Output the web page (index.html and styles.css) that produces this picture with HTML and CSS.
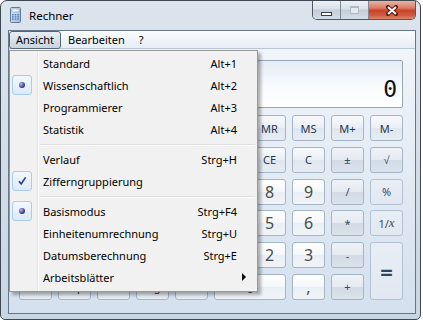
FILE: index.html
```html
<!DOCTYPE html>
<html lang="de">
  <head>
    <meta charset="UTF-8" />
    <title>Rechner</title>
    <link rel="stylesheet" href="styles.css">
  </head>
  <body>
    <div class="window">
      <div class="titlebar">
        <svg class="app-icon" width="11" height="16" viewBox="0 0 11 16">
          <defs>
            <linearGradient id="icobody" x1="0" y1="0" x2="1" y2="1">
              <stop offset="0" stop-color="#e8f0f9" />
              <stop offset="1" stop-color="#9cb6d3" />
            </linearGradient>
          </defs>
          <rect x="0.5" y="0.5" width="10" height="15" rx="1" fill="url(#icobody)" stroke="#5d7898" />
          <rect x="2" y="2" width="7" height="3" fill="#f6faff" stroke="#7f99b7" stroke-width="0.6" />
          <g fill="#4e7fbf">
            <rect x="2" y="7" width="1.6" height="1.4" /><rect x="4.7" y="7" width="1.6" height="1.4" /><rect x="7.4" y="7" width="1.6" height="1.4" />
            <rect x="2" y="9.2" width="1.6" height="1.4" /><rect x="4.7" y="9.2" width="1.6" height="1.4" /><rect x="7.4" y="9.2" width="1.6" height="1.4" />
            <rect x="2" y="11.4" width="1.6" height="1.4" /><rect x="4.7" y="11.4" width="1.6" height="1.4" /><rect x="7.4" y="11.4" width="1.6" height="1.4" />
          </g>
        </svg>
        <span class="title">Rechner</span>
        <div class="caption">
          <div class="cap-btn"><span class="min-bar"></span></div>
          <div class="cap-btn"><span class="max-box"></span></div>
          <div class="cap-btn close">
            <svg width="12" height="11" viewBox="0 0 12 11">
              <path d="M2 2 L10 9 M10 2 L2 9" stroke="#5a1a0e" stroke-width="4" stroke-linecap="square" />
              <path d="M2 2 L10 9 M10 2 L2 9" stroke="#fff" stroke-width="2" />
            </svg>
          </div>
        </div>
      </div>

      <div class="client">
        <div class="menubar">
          <span class="menu-item open">Ansicht</span>
          <span class="menu-item">Bearbeiten</span>
          <span class="menu-item">?</span>
        </div>

        <div class="calc">
          <div class="display">0</div>

          <!-- die Tasten unter dem offenen Menü bleiben ohne Beschriftung -->
          <div class="keys">
            <div class="angle span5"></div>
            <div class="k"></div><div class="k">MR</div><div class="k">MS</div><div class="k">M+</div><div class="k">M-</div>

            <div></div><div class="k"></div><div class="k"></div><div class="k"></div><div class="k"></div>
            <div class="k"></div><div class="k">CE</div><div class="k">C</div><div class="k op">±</div><div class="k op">√</div>

            <div class="k"></div><div class="k"></div><div class="k"></div><div class="k"></div><div class="k"></div>
            <div class="k num"></div><div class="k num">8</div><div class="k num">9</div><div class="k op">/</div><div class="k fn">%</div>

            <div class="k"></div><div class="k"></div><div class="k"></div><div class="k"></div><div class="k"></div>
            <div class="k num"></div><div class="k num">5</div><div class="k num">6</div><div class="k op">*</div><div class="k fn">1/<i>x</i></div>

            <div class="k"></div><div class="k"></div><div class="k"></div><div class="k"></div><div class="k"></div>
            <div class="k num"></div><div class="k num">2</div><div class="k num">3</div><div class="k op">-</div><div class="k fn equals">=</div>

            <div class="k">F-E</div><div class="k">Exp</div><div class="k">Mod</div><div class="k">log</div><div class="k">10ˣ</div>
            <div class="k num zero">0</div><div class="k num">,</div><div class="k op">+</div>
          </div>
        </div>
      </div>

      <!-- aufgeklapptes Menü "Ansicht" -->
      <div class="dropdown">
        <div class="item"><span></span><span>Standard</span><span class="key">Alt+1</span><span></span></div>
        <div class="item"><span class="mark"><i class="dot"></i></span><span>Wissenschaftlich</span><span class="key">Alt+2</span><span></span></div>
        <div class="item"><span></span><span>Programmierer</span><span class="key">Alt+3</span><span></span></div>
        <div class="item"><span></span><span>Statistik</span><span class="key">Alt+4</span><span></span></div>
        <div class="sep"></div>
        <div class="item"><span></span><span>Verlauf</span><span class="key">Strg+H</span><span></span></div>
        <div class="item">
          <span class="mark">
            <svg width="10" height="10" viewBox="0 0 10 10"><path d="M2 5.2 L4.2 8 L8.6 1.4" fill="none" stroke="#1d3a8f" stroke-width="1.6" /></svg>
          </span>
          <span>Zifferngruppierung</span><span class="key"></span><span></span>
        </div>
        <div class="sep"></div>
        <div class="item"><span class="mark"><i class="dot"></i></span><span>Basismodus</span><span class="key">Strg+F4</span><span></span></div>
        <div class="item"><span></span><span>Einheitenumrechnung</span><span class="key">Strg+U</span><span></span></div>
        <div class="item"><span></span><span>Datumsberechnung</span><span class="key">Strg+E</span><span></span></div>
        <div class="item"><span></span><span>Arbeitsblätter</span><span class="key"></span><span class="arrow"></span></div>
      </div>
    </div>
  </body>
</html>
```

FILE: styles.css
```css
* {
  box-sizing: border-box;
  --frame-top: #dce5ee;
  --frame-bottom: #c8d5e3;
  --line: #667789;
  --label: #22364f;
}

body {
  margin: 0;
  background-color: #fff;
  font-family: "Noto Sans", sans-serif;
  font-size: 11px;
  color: #000;
}

.window {
  position: relative;
  width: 421px;
  height: 320px;
  border: 1px solid #3e4853;
  border-radius: 7px 7px 5px 5px;
  background: linear-gradient(var(--frame-top), var(--frame-bottom));
  padding: 0 4px 5px 7px;
  display: flex;
  flex-direction: column;
}

/* Titelleiste */
.titlebar {
  height: 29px;
  display: flex;
  align-items: flex-start;
}

.app-icon {
  margin: 6px 0 0 2px;
}

.title {
  margin: 7px 0 0 8px;
  font-size: 11.5px;
  line-height: 16px;
}

.caption {
  margin-left: auto;
  display: flex;
  height: 19px;
  border: 1px solid #4e5a68;
  border-top: none;
  border-radius: 0 0 5px 5px;
  overflow: hidden;
}

.cap-btn {
  width: 28px;
  display: flex;
  justify-content: center;
  background: linear-gradient(#eef2f6, #d9e0e8 45%, #c3ceda 50%, #d4dde7);
  border-right: 1px solid #7d8a99;
}

.min-bar {
  width: 11px;
  height: 4px;
  margin-top: 11px;
  border: 1px solid #35404d;
  background-color: #fff;
}

.max-box {
  width: 9px;
  height: 8px;
  margin-top: 5px;
  border: 1px solid #b0bac6;
  border-top-width: 2px;
  background-color: #e4e9ef;
}

.cap-btn.close {
  width: 46px;
  border-right: none;
  align-items: center;
  background: linear-gradient(#eab3a5, #d97a62 40%, #c7442a 52%, #cf5c40 80%, #dc876a);
}

/* Fensterinhalt */
.client {
  flex: 1;
  border: 1px solid var(--line);
  background: linear-gradient(#f2f6fa, #d4e0ee);
  display: flex;
  flex-direction: column;
}

.menubar {
  height: 18px;
  display: flex;
  background: linear-gradient(#fbfcfe, #e6edf6);
  border-bottom: 1px solid #b9c5d3;
}

.menu-item {
  height: 18px;
  line-height: 16px;
  padding: 0 6px;
  border: 1px solid transparent;
  border-radius: 3px;
}

.menu-item.open {
  border-color: #56677a;
  background: linear-gradient(#e8edf3, #c9d4e0);
}

.calc {
  padding: 11px 0 0 10px;
}

.display {
  width: 384px;
  height: 48px;
  margin-bottom: 7px;
  border: 1px solid #97a7ba;
  border-radius: 2px;
  background: linear-gradient(#e5ecf4, #f8fafd 55%, #fff);
  font-family: "DejaVu Sans Mono", monospace;
  font-size: 23px;
  line-height: 28px;
  text-align: right;
  padding: 14px 5px 0 0;
  color: #111;
}

.keys {
  display: grid;
  grid-template-columns: repeat(10, 33px);
  grid-auto-rows: 26px;
  column-gap: 6px;
  row-gap: 5.8px;
}

.k {
  display: flex;
  align-items: center;
  justify-content: center;
  border: 1px solid #a5b4c7;
  border-radius: 3px;
  background: linear-gradient(#f7f9fc, #eaeff5 50%, #dfe6ef 50%, #e6ecf3);
  color: var(--label);
  font-size: 11px;
}

.k.num {
  background: linear-gradient(#fefefe, #f4f7fa 50%, #eaeff5 50%, #f0f4f8);
  color: #4a4a4a;
  font-size: 16px;
}

.k.op {
  background: linear-gradient(#eff3f8, #e4eaf1 50%, #d2dbe6 50%, #dae2ec);
  color: #3a4c62;
}

.k.fn {
  background: linear-gradient(#e8eef5, #e1e8f1);
  border-color: #b3c1d2;
  color: #3a4c62;
}

.k.fn i {
  font-family: "Liberation Serif", serif;
  font-size: 13px;
}

.k.equals {
  grid-row: span 2;
  font-size: 22px;
  font-weight: bold;
  color: #2f4560;
}

.k.zero {
  grid-column: span 2;
}

.angle {
  grid-column: span 5;
  border: 1px solid #b9c6d5;
  border-radius: 3px;
}

/* Aufgeklapptes Menü */
.dropdown {
  position: absolute;
  left: 8px;
  top: 49px;
  width: 249px;
  height: 242px;
  border: 1px solid #979797;
  padding: 1px 0 2px 0;
  background: linear-gradient(90deg, #f1f1f1 27px, #e2e3e3 27px 28px, #fff 28px 29px, #f1f1f1 29px);
  box-shadow: 3px 3px 3px rgba(0, 0, 0, 0.3);
}

.item {
  height: 22px;
  display: grid;
  grid-template-columns: 33px 1fr auto 20px;
  align-items: center;
}

.key {
  justify-self: end;
}

.mark {
  width: 20px;
  height: 20px;
  margin-left: 2px;
  border: 1px solid #a9cbed;
  border-radius: 3px;
  background: linear-gradient(#f3f8fd, #dce9f7);
  display: flex;
  align-items: center;
  justify-content: center;
}

.dot {
  width: 6px;
  height: 6px;
  border-radius: 50%;
  background: radial-gradient(circle at 35% 35%, #b9b9f2, #3c3c92 60%, #1c1c58);
}

.arrow {
  width: 0;
  height: 0;
  margin-left: 5px;
  border-top: 4px solid transparent;
  border-bottom: 4px solid transparent;
  border-left: 4px solid #000;
}

.sep {
  height: 2px;
  margin: 4px 2px 2px 30px;
  border-top: 1px solid #e0e0e0;
  border-bottom: 1px solid #fff;
}
```
